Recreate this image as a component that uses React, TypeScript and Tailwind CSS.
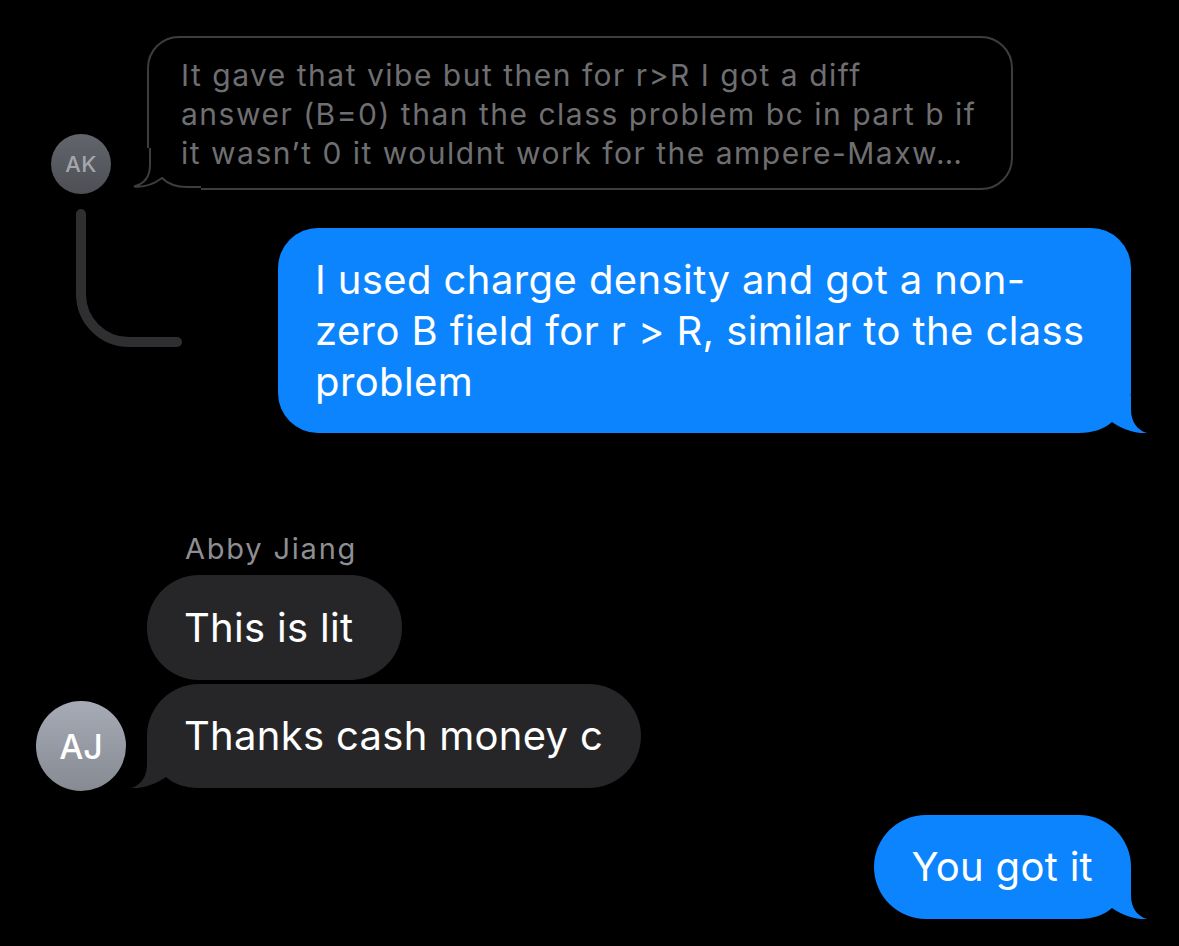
import React from "react";

const BLUE = "#0b84fe";
const GRAY = "#262628";

const TAIL_D =
  "M52 0 L52 13 C52 26 58 34 68 37 C58 38 44 34 33 26 C25 33 14 37 0 37 L0 0 Z";

function TailRight({ color }: { color: string }) {
  return (
    <svg
      className="absolute right-[-18px] bottom-0"
      width="70"
      height="37"
      viewBox="0 0 70 37"
    >
      <rect x="0" y="0" width="70" height="37" fill="#000" />
      <path d={TAIL_D} fill={color} />
    </svg>
  );
}

function TailLeft({ color }: { color: string }) {
  return (
    <svg
      className="absolute left-[-18px] bottom-0"
      width="70"
      height="37"
      viewBox="0 0 70 37"
    >
      <rect x="0" y="0" width="70" height="37" fill="#000" />
      <g transform="translate(70 0) scale(-1 1)">
        <path d={TAIL_D} fill={color} />
      </g>
    </svg>
  );
}

function OutlineTail() {
  return (
    <svg
      className="absolute left-[-18px] bottom-[-2px]"
      width="70"
      height="42"
      viewBox="0 0 70 42"
    >
      <rect x="0" y="0" width="70" height="42" fill="#000" />
      <path
        d="M19 0 L19 17 C19 29 13 36 3 38.5 C13 39.5 23 36 31 30 C37 36 44 39 56 39 L70 39"
        fill="none"
        stroke="#3d3d40"
        strokeWidth="2"
      />
    </svg>
  );
}

export default function App() {
  return (
    <div
      className="w-[1179px] h-[946px] bg-black overflow-hidden"
      style={{ fontFamily: "Inter, 'Noto Sans', sans-serif" }}
    >
      <div className="flex flex-col pt-[36px]">
        {/* quoted message row */}
        <div className="flex items-end pl-[51px]">
          <div className="w-[60px] h-[60px] rounded-full bg-gradient-to-b from-[#62656c] to-[#4d4f55] flex items-center justify-center mb-[-4px] shrink-0">
            <span className="text-[22px] font-medium text-[#a4a6ab] tracking-[0.5px]">AK</span>
          </div>
          <div className="ml-[36px] relative w-[866px] border-2 border-[#3d3d40] rounded-[32px] pl-[32px] pr-[20px] pt-[18px] pb-[15px]">
            <OutlineTail />
            <p className="relative z-10 text-[30px] leading-[39px] tracking-[1.5px] text-[#6f6f72] whitespace-nowrap">
              It gave that vibe but then for r&gt;R I got a diff
              <br />
              answer (B=0) than the class problem bc in part b if
              <br />
              it wasn’t 0 it wouldnt work for the ampere-Maxw…
            </p>
          </div>
        </div>

        {/* reply line + blue bubble */}
        <div className="flex justify-between items-start pl-[71px] pr-[48px] mt-[15px]">
          <svg width="120" height="145" viewBox="0 0 120 145">
            <path
              d="M10 9 V89 A48 48 0 0 0 58 137 H106"
              fill="none"
              stroke="#2f2f31"
              strokeWidth="10"
              strokeLinecap="round"
            />
          </svg>
          <div
            className="relative mt-[23px] w-[853px] rounded-[40px] pl-[37px] pr-[20px] py-[26px]"
            style={{ backgroundColor: BLUE }}
          >
            <TailRight color={BLUE} />
            <p className="relative z-10 text-[40px] leading-[51px] tracking-[0.4px] text-white whitespace-nowrap">
              I used charge density and got a non-
              <br />
              zero B field for r &gt; R, similar to the class
              <br />
              problem
            </p>
          </div>
        </div>

        {/* Abby Jiang group */}
        <div className="flex items-end pl-[36px] mt-[100px]">
          <div className="w-[90px] h-[90px] rounded-full bg-gradient-to-b from-[#a7abb5] to-[#868a93] flex items-center justify-center mb-[-3px] shrink-0">
            <span className="text-[34px] font-medium text-white">AJ</span>
          </div>
          <div className="ml-[21px] flex flex-col items-start">
            <div className="pl-[38px] text-[29px] leading-[32px] tracking-[1.8px] text-[#8e8e93] mb-[10px]">
              Abby Jiang
            </div>
            <div
              className="rounded-[52px] pl-[37px] pr-[49px] pt-[27px] pb-[27px]"
              style={{ backgroundColor: GRAY }}
            >
              <p className="text-[40px] leading-[51px] tracking-[0.3px] text-white">This is lit</p>
            </div>
            <div
              className="relative mt-[4px] rounded-[52px] rounded-bl-none pl-[37px] pr-[38px] pt-[26px] pb-[27px]"
              style={{ backgroundColor: GRAY }}
            >
              <TailLeft color={GRAY} />
              <p className="relative z-10 text-[40px] leading-[51px] tracking-[0.3px] text-white">
                Thanks cash money c
              </p>
            </div>
          </div>
        </div>

        {/* You got it */}
        <div className="flex justify-end pr-[48px] mt-[27px]">
          <div
            className="relative rounded-[52px] rounded-br-none pl-[37px] pr-[38px] pt-[26px] pb-[27px]"
            style={{ backgroundColor: BLUE }}
          >
            <TailRight color={BLUE} />
            <p className="relative z-10 text-[40px] leading-[51px] tracking-[0.3px] text-white">You got it</p>
          </div>
        </div>
      </div>
    </div>
  );
}
